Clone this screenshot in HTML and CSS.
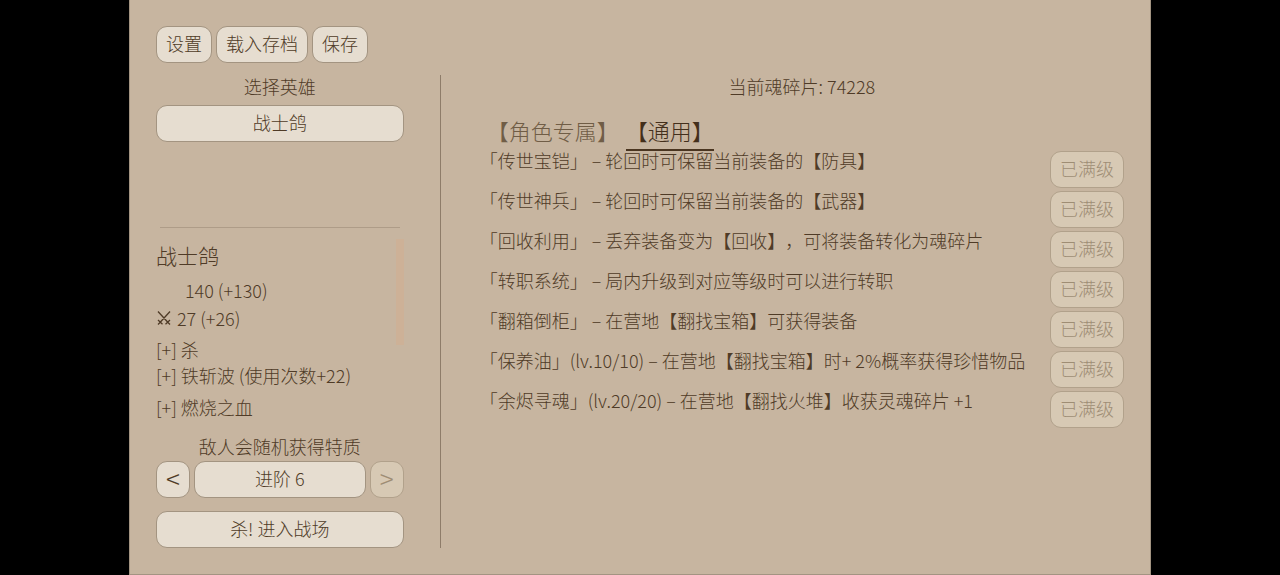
FILE: index.html
```html
<!DOCTYPE html>
<html lang="zh-CN">
<head>
<meta charset="utf-8">
<meta name="viewport" content="width=device-width, initial-scale=1">
<title>战士鸽</title>
<link rel="stylesheet" href="styles.css">
</head>
<body>
<div class="app">
  <nav class="toolbar">
    <button class="btn" type="button">设置</button>
    <button class="btn" type="button">载入存档</button>
    <button class="btn" type="button">保存</button>
  </nav>
  <div class="columns">
    <section class="hero">
      <h2 class="caption">选择英雄</h2>
      <div class="hero-list">
        <button class="btn btn-wide" type="button">战士鸽</button>
      </div>
      <div class="hero-detail">
        <h3 class="hero-name">战士鸽</h3>
        <p class="stat"><span class="stat-blank"></span>140 (+130)</p>
        <p class="stat">
          <svg class="swords" viewBox="0 0 16 16" aria-hidden="true"><path d="M2 1.500 12.500 13M14 1.500 3.500 13M2 10 6.500 14.200M14 10 9.500 14.200M4 12.500 2 14.500M12 12.500 14 14.500"/></svg>
          27 (+26)
        </p>
        <ul class="skills">
          <li>[+] 杀</li>
          <li>[+] 铁斩波 (使用次数+22)</li>
          <li class="passive">[+] 燃烧之血</li>
        </ul>
        <span class="scroll-thumb"></span>
      </div>
      <p class="caption">敌人会随机获得特质</p>
      <div class="level">
        <button class="btn btn-step" type="button">&lt;</button>
        <button class="btn btn-level" type="button">进阶 6</button>
        <button class="btn btn-step" type="button" disabled>&gt;</button>
      </div>
      <button class="btn btn-wide" type="button">杀! 进入战场</button>
    </section>
    <main class="upgrades">
      <p class="caption">当前魂碎片: 74228</p>
      <div class="tabs" role="tablist">
        <button class="tab" type="button" role="tab" aria-selected="false">【角色专属】</button>
        <button class="tab tab-active" type="button" role="tab" aria-selected="true">【通用】</button>
      </div>
      <ul class="rows">
        <li class="row"><span>「传世宝铠」 – 轮回时可保留当前装备的【防具】</span><button class="btn" type="button" disabled>已满级</button></li>
        <li class="row"><span>「传世神兵」 – 轮回时可保留当前装备的【武器】</span><button class="btn" type="button" disabled>已满级</button></li>
        <li class="row"><span>「回收利用」 – 丢弃装备变为【回收】，可将装备转化为魂碎片</span><button class="btn" type="button" disabled>已满级</button></li>
        <li class="row"><span>「转职系统」 – 局内升级到对应等级时可以进行转职</span><button class="btn" type="button" disabled>已满级</button></li>
        <li class="row"><span>「翻箱倒柜」 – 在营地【翻找宝箱】可获得装备</span><button class="btn" type="button" disabled>已满级</button></li>
        <li class="row"><span>「保养油」(lv.10/10) – 在营地【翻找宝箱】时+ 2%概率获得珍惜物品</span><button class="btn" type="button" disabled>已满级</button></li>
        <li class="row"><span>「余烬寻魂」(lv.20/20) – 在营地【翻找火堆】收获灵魂碎片 +1</span><button class="btn" type="button" disabled>已满级</button></li>
      </ul>
    </main>
  </div>
</div>
</body>
</html>
```

FILE: styles.css
```css
* {
  box-sizing: border-box;
  margin: 0;
  padding: 0;
}

body {
  display: flex;
  justify-content: center;
  min-height: 100vh;
  background: #000;
  color: #4f3b27;
  font: 300 18px/24px "Noto Sans CJK SC", sans-serif;
  text-spacing-trim: space-all;
}

.app {
  display: flex;
  flex-direction: column;
  gap: 12px;
  width: calc(100vh * 16 / 9);
  max-width: 100%;
  padding: 26px;
  border: 1px solid #a39482;
  border-top: 0;
  background: #c7b5a0;
}

button {
  font: inherit;
  color: inherit;
}

ul {
  list-style: none;
}

.toolbar {
  display: flex;
  gap: 4px;
}

.btn {
  height: 37px;
  padding: 0 9px 3px;
  border: 1px solid #a39481;
  border-radius: 11px;
  background: #e6ddd0;
  white-space: nowrap;
}

.btn:disabled {
  border-color: #b1a18b;
  background: #d7c9b4;
  color: #9e8d74;
}

.btn-wide {
  width: 100%;
}

.columns {
  display: grid;
  flex: 1;
  grid-template-columns: 5fr 12fr;
}

.hero {
  display: flex;
  flex-direction: column;
  padding-right: 36px;
  border-right: 1px solid #8e7c69;
}

.caption {
  padding-bottom: 2px;
  font-size: 18px;
  font-weight: 300;
  line-height: 22px;
  text-align: center;
}

.hero-list {
  flex: 1;
  padding-top: 6px;
}

.hero-detail {
  position: relative;
  padding: 12px 0 16px;
}

.hero-detail::before {
  content: "";
  position: absolute;
  top: 0;
  right: 4px;
  left: 4px;
  border-top: 1px solid #ae9c88;
}

.hero-name {
  margin-bottom: 5px;
  font-size: 21px;
  font-weight: 300;
  line-height: 32px;
}

.stat {
  display: flex;
  align-items: center;
  gap: 5px;
  line-height: 28px;
}

.stat-blank {
  width: 24px;
}

.swords {
  width: 16px;
  height: 16px;
  fill: none;
  stroke: currentColor;
  stroke-width: 1.300;
}

.skills {
  display: grid;
  gap: 2px;
  padding-top: 5px;
}

.passive {
  padding-top: 6px;
}

.scroll-thumb {
  position: absolute;
  top: 12px;
  right: 0;
  width: 8px;
  height: 106px;
  background: #cdb197;
}

.level {
  display: flex;
  gap: 4px;
  padding: 2px 0 13px;
}

.btn-step {
  width: 34px;
  padding: 0 0 3px;
  font-size: 26px;
}

.btn-level {
  flex: 1;
}

.upgrades {
  padding-left: 39px;
}

.tabs {
  display: flex;
  gap: 7px;
  padding: 16px 0 0 7px;
}

.tab {
  padding-bottom: 3px;
  border: 0;
  border-bottom: 2px solid transparent;
  background: none;
  color: #705d46;
  font-size: 22px;
  line-height: 31px;
}

.tab-active {
  border-color: #4a3520;
  color: #432f1b;
}

.rows {
  display: grid;
  gap: 3px;
}

.row {
  display: flex;
  align-items: flex-start;
  justify-content: space-between;
  line-height: 18px;
}
```
